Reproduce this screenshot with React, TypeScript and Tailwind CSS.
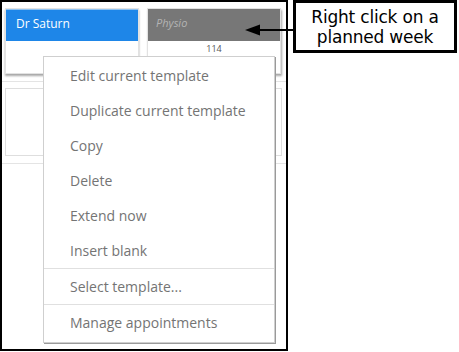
import React from "react";

const items1 = [
  "Edit current template",
  "Duplicate current template",
  "Copy",
  "Delete",
  "Extend now",
  "Insert blank",
];

export default function App() {
  return (
    <div className="relative w-[459px] h-[352px] bg-white overflow-hidden" style={{ fontFamily: '"Open Sans", sans-serif' }}>
      <div className="flex items-start">
        {/* framed screenshot */}
        <div className="w-[288px] h-[351px] border-2 border-black bg-white flex flex-col">
          <div className="flex gap-[8px] pl-[3px] pt-[6px]">
            <div className="w-[134px] h-[66px] bg-white border border-[#e2e2e2] shadow-[0_2px_2px_rgba(0,0,0,0.35)] flex flex-col">
              <div className="h-[32px] bg-[#1e86e8] border-t border-[#8fc3f2] text-white text-[12px] pl-[10px] pt-[6px] leading-[16px]">
                Dr Saturn
              </div>
            </div>
            <div className="w-[134px] h-[66px] bg-white border border-[#e2e2e2] shadow-[1px_2px_2px_rgba(0,0,0,0.35)] flex flex-col">
              <div className="h-[32px] bg-[#777777] text-[#b4b4b4] italic text-[11px] pl-[8px] pt-[6px] leading-[16px]">
                Physio
              </div>
              <div className="text-center text-[9px] text-[#555] leading-[12px] pt-[2px]">114</div>
            </div>
          </div>
          <div className="mt-[7px] border-t border-[#e4e4e4]"></div>
          <div className="mt-[6px] ml-[3px] w-[277px] h-[68px] border border-[#dedede]"></div>
          <div className="mt-[7px] border-t border-[#e4e4e4]"></div>
        </div>
        {/* annotation */}
        <div className="ml-[5px] w-[164px] h-[53px] border-[3px] border-black bg-white flex flex-col items-center justify-center text-[17px] leading-[20px] text-black" style={{ fontFamily: '"DejaVu Sans", sans-serif', letterSpacing: "-0.2px" }}>
          <span>Right click on a</span>
          <span>planned week</span>
        </div>
      </div>

      {/* arrow */}
      <svg className="absolute left-[240px] top-[22px]" width="56" height="16" viewBox="0 0 56 16">
        <line x1="14" y1="8" x2="56" y2="8" stroke="black" strokeWidth="2.2" />
        <polygon points="5,8 20,2.5 20,13.5" fill="black" />
      </svg>

      {/* context menu */}
      <div className="absolute left-[43px] top-[56px] w-[232px] bg-white border border-[#cfcfcf] shadow-[1px_1px_0_#9a9a9a] pt-[1px] pb-[2px] text-[14px] text-[#747474]">
        {items1.map((t) => (
          <div key={t} className="h-[35px] flex items-center pl-[26px]">{t}</div>
        ))}
        <div className="border-t border-[#e0e0e0]"></div>
        <div className="h-[35px] flex items-center pl-[26px]">Select template...</div>
        <div className="border-t border-[#e0e0e0]"></div>
        <div className="h-[35px] flex items-center pl-[26px]">Manage appointments</div>
      </div>
    </div>
  );
}
